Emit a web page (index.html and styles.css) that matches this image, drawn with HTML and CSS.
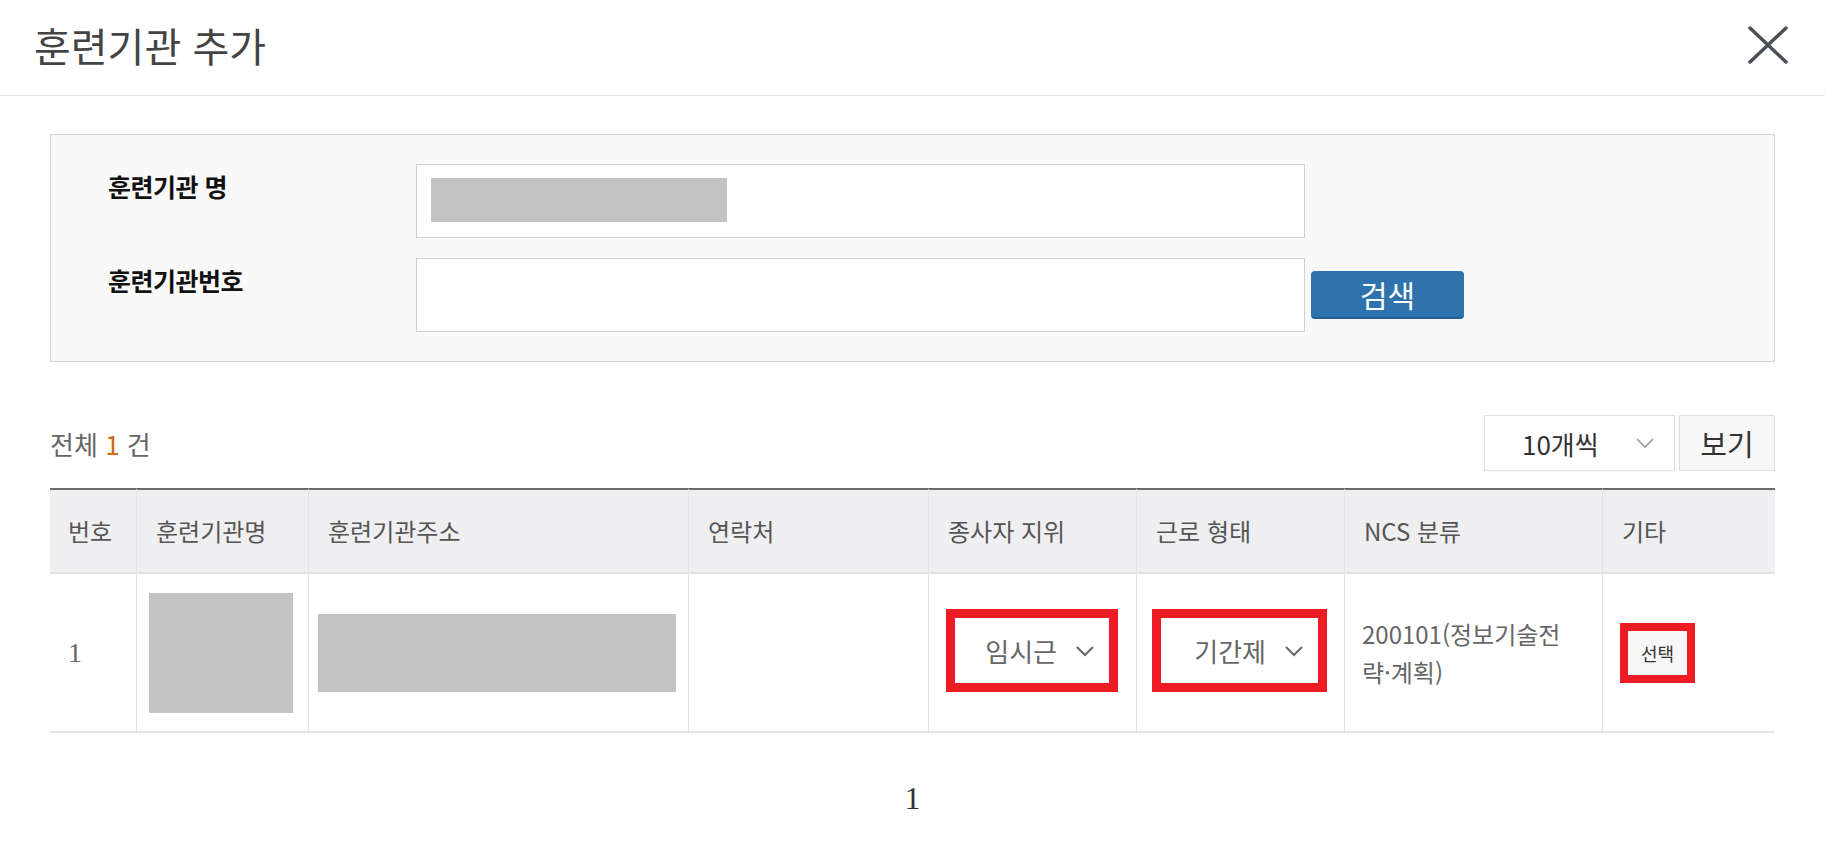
FILE: index.html
```html
<!DOCTYPE html>
<html lang="ko">
<head>
<meta charset="utf-8">
<title>훈련기관 추가</title>
<link rel="stylesheet" href="styles.css">
</head>
<body>
<div class="modal">
  <header class="modal-head">
    <h1 class="modal-title">훈련기관 추가</h1>
    <button class="close" type="button" aria-label="닫기">
      <svg width="44" height="42" viewBox="0 0 44 42"><path d="M4 4 L40 38 M40 4 L4 38" stroke="#4b4f56" stroke-width="3.5" stroke-linecap="round" fill="none"/></svg>
    </button>
  </header>
  <main class="modal-body">
    <section class="search-panel">
      <div class="field-row">
        <div class="field-label">훈련기관 명</div>
        <div class="field-input"><span class="redact redact-name"></span></div>
      </div>
      <div class="field-row">
        <div class="field-label">훈련기관번호</div>
        <div class="field-input"></div>
        <button class="btn-search" type="button">검색</button>
      </div>
    </section>

    <div class="toolbar">
      <div class="total">전체 <em>1</em> 건</div>
      <div class="view-ctrl">
        <div class="page-size"><span>10개씩</span>
          <svg width="20" height="12" viewBox="0 0 20 12"><path d="M2 2 L10 10 L18 2" stroke="#9a9a9a" stroke-width="1.6" fill="none"/></svg>
        </div>
        <button class="btn-view" type="button">보기</button>
      </div>
    </div>

    <table class="result">
      <thead>
        <tr>
          <th class="w1">번호</th>
          <th class="w2">훈련기관명</th>
          <th class="w3">훈련기관주소</th>
          <th class="w4">연락처</th>
          <th class="w5">종사자 지위</th>
          <th class="w6">근로 형태</th>
          <th class="w7">NCS 분류</th>
          <th class="w8">기타</th>
        </tr>
      </thead>
      <tbody>
        <tr>
          <td class="c-num">1</td>
          <td class="c-name"><span class="redact redact-inst"></span></td>
          <td class="c-addr"><span class="redact redact-addr"></span></td>
          <td></td>
          <td>
            <div class="mark mark-a"><div class="cell-select">임시근<svg width="20" height="12" viewBox="0 0 20 12"><path d="M2 2 L10 10 L18 2" stroke="#666" stroke-width="2" fill="none"/></svg></div></div>
          </td>
          <td class="c-type">
            <div class="mark mark-b"><div class="cell-select">기간제<svg width="20" height="12" viewBox="0 0 20 12"><path d="M2 2 L10 10 L18 2" stroke="#666" stroke-width="2" fill="none"/></svg></div></div>
          </td>
          <td class="c-ncs">200101(정보기술전<br>략·계획)</td>
          <td>
            <div class="mark mark-sm"><button class="btn-select" type="button">선택</button></div>
          </td>
        </tr>
      </tbody>
    </table>

    <div class="pager">1</div>
  </main>
</div>
</body>
</html>
```

FILE: styles.css
```css
* { box-sizing: border-box; }

body {
  margin: 0;
  background: #fff;
  color: #333;
  font-family: "Noto Sans CJK KR", "Noto Sans", sans-serif;
}

button { font-family: inherit; cursor: pointer; }

.modal-head {
  height: 96px;
  border-bottom: 1px solid #e1e1e1;
  display: flex;
  align-items: center;
  justify-content: space-between;
  padding: 0 35px 5px 34px;
}

.modal-title {
  margin: 0;
  font-size: 40px;
  font-weight: 400;
  line-height: 1;
  color: #444;
}

.close {
  border: 0;
  background: none;
  padding: 0;
  display: flex;
}

.modal-body { padding: 38px 50px 0; }

.search-panel {
  border: 1px solid #d3d3d3;
  background: #f9f9f9;
  padding: 29px 57px;
  display: flex;
  flex-direction: column;
  gap: 20px;
}

.field-row {
  display: flex;
  align-items: flex-start;
}

.field-label {
  flex: none;
  width: 308px;
  padding-top: 5px;
  font-size: 25px;
  font-weight: 700;
  line-height: 34px;
  letter-spacing: -0.5px;
  color: #111;
}

.field-input {
  flex: none;
  width: 889px;
  height: 74px;
  border: 1px solid #cfcfcf;
  background: #fff;
  padding: 13px 14px;
}

.redact { display: block; background: #c3c3c3; }
.redact-name { width: 296px; height: 44px; }
.redact-inst { width: 144px; height: 120px; }
.redact-addr { width: 358px; height: 78px; }

.btn-search {
  align-self: center;
  margin-left: 6px;
  width: 153px;
  height: 48px;
  border: 0;
  border-bottom: 2px solid #245e90;
  border-radius: 4px;
  background: #2e73ad;
  color: #fff;
  font-size: 30px;
  line-height: 1;
  padding: 0;
}

.toolbar {
  margin-top: 53px;
  height: 56px;
  display: flex;
  align-items: center;
  justify-content: space-between;
}

.total { font-size: 26px; color: #666; }
.total em { font-style: normal; color: #d0690f; }

.view-ctrl { display: flex; gap: 4px; }

.page-size {
  width: 191px;
  height: 56px;
  border: 1px solid #ddd;
  background: #fff;
  display: flex;
  align-items: center;
  justify-content: space-between;
  padding: 0 19px 0 37px;
  font-size: 26px;
  color: #333;
}

.btn-view {
  width: 96px;
  height: 56px;
  border: 1px solid #ddd;
  background: #f7f7f7;
  color: #333;
  font-size: 29px;
  padding: 0;
}

.result {
  width: 100%;
  margin-top: 17px;
  border-collapse: separate;
  border-spacing: 0;
  table-layout: fixed;
}

.result th {
  background: #efeff1;
  border-top: 2px solid #6b6b6b;
  border-bottom: 2px solid #e3e3e3;
  border-left: 1px solid #e3e3e3;
  padding: 24px 19px;
  font-size: 24px;
  font-weight: 400;
  line-height: 34px;
  color: #555;
  text-align: left;
  white-space: nowrap;
}

.result th.w1 { width: 86px; padding-left: 18px; }
.result th.w2 { width: 172px; }
.result th.w3 { width: 380px; }
.result th.w4 { width: 240px; }
.result th.w5 { width: 208px; }
.result th.w6 { width: 208px; }
.result th.w7 { width: 258px; }
.result th.w8 { width: 173px; }

.result td {
  border-bottom: 2px solid #e5e5e5;
  border-left: 1px solid #e3e3e3;
  padding: 19px 17px 18px;
  vertical-align: middle;
  font-size: 24px;
  line-height: 38px;
  color: #666;
}

.result th:first-child,
.result td:first-child { border-left: 0; }

.result td.c-num {
  padding-left: 18px;
  font-family: "Liberation Serif", serif;
  font-size: 28px;
  color: #666;
}
.result td.c-name { padding-left: 12px; }
.result td.c-addr { padding-left: 9px; }
.result td.c-type { padding-left: 15px; }
.result td.c-ncs { white-space: nowrap; }

.mark {
  display: flex;
  width: fit-content;
  border: 9px solid #ed1c24;
  margin-bottom: 5px;
}

.cell-select {
  height: 65px;
  display: flex;
  align-items: center;
  justify-content: flex-end;
  gap: 18px;
  padding-right: 14px;
  background: #fff;
  font-size: 26px;
  line-height: 1;
  color: #666;
}
.mark-a .cell-select { width: 154px; }
.mark-b .cell-select { width: 157px; }

.mark-sm { border-width: 8px; margin-bottom: 0; }

.btn-select {
  width: 59px;
  height: 44px;
  border: 0;
  padding: 0;
  background: #f7f7f7;
  color: #333;
  font-size: 18px;
  line-height: 1;
}

.pager {
  margin-top: 45px;
  text-align: center;
  font-family: "Liberation Serif", serif;
  font-size: 32px;
  line-height: 40px;
  color: #333;
}
```
